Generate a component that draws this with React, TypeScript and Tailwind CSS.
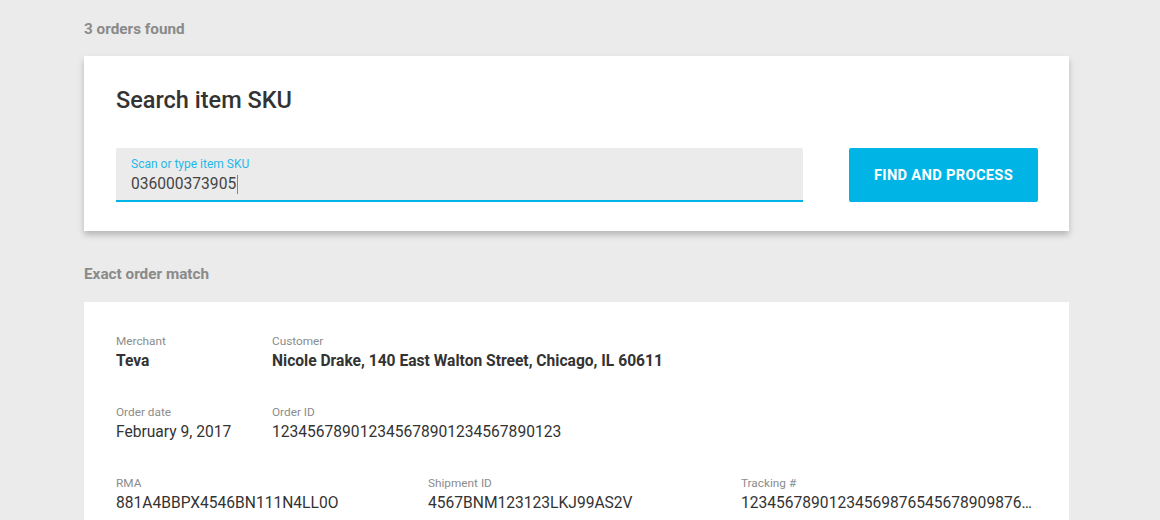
function Field({
    label,
    value,
    strong,
}: {
    label: string;
    value: string;
    strong?: boolean;
}) {
    return (
        <div className="flex flex-col gap-[2px] min-w-0 pr-5">
            <span className="text-[11.8px] leading-4 text-[#8c8c8c]">{label}</span>
            <span
                className={
                    strong
                        ? "text-[15.6px] leading-5 font-bold text-[#333333] truncate"
                        : "text-[15.6px] leading-5 text-[#333333] truncate"
                }
            >
                {value}
            </span>
        </div>
    );
}

export default function App() {
    return (
        <div
            className="w-[1160px] h-[520px] overflow-hidden bg-[#ebebeb] px-[84px] pt-[19px]"
            style={{ fontFamily: "Roboto, 'Liberation Sans', sans-serif" }}
        >
            <div className="w-[985px] flex flex-col">
                <p className="text-[15.3px] leading-5 font-bold text-[#8a8a8a]">3 orders found</p>

                <div className="mt-[17px] bg-white pl-8 pr-[31px] pt-7 pb-[29px] shadow-[0_4px_6px_rgba(0,0,0,0.22)]">
                    <h2 className="text-[23.5px] leading-8 font-medium text-[#333333]">Search item SKU</h2>
                    <div className="mt-8 flex items-start justify-between">
                        <div className="w-[687px] bg-[#ebebeb] rounded-t-[2px] border-b-2 border-[#00b4e6] px-[15px] pt-[8px] pb-[6px] flex flex-col gap-[2px]">
                            <span className="text-[12px] leading-4 text-[#1fb8e8]">Scan or type item SKU</span>
                            <div className="flex items-center text-[15.6px] leading-5 text-[#444444]">
                                036000373905
                                <span className="ml-[1px] w-px h-[19px] bg-[#00b4e6]"></span>
                            </div>
                        </div>
                        <button className="w-[189px] h-[54px] rounded-[2px] bg-[#00b4e6] text-white text-[14.7px] font-bold tracking-[0.3px]">
                            FIND AND PROCESS
                        </button>
                    </div>
                </div>

                <p className="mt-[33px] text-[15.3px] leading-5 font-bold text-[#8a8a8a]">Exact order match</p>

                <div className="mt-[18px] bg-white pl-8 pr-4 pt-[31px] pb-8 flex flex-col gap-[33px]">
                    <div className="grid grid-cols-[156px_1fr]">
                        <Field label="Merchant" value="Teva" strong />
                        <Field
                            label="Customer"
                            value="Nicole Drake, 140 East Walton Street, Chicago, IL 60611"
                            strong
                        />
                    </div>
                    <div className="grid grid-cols-[156px_1fr]">
                        <Field label="Order date" value="February 9, 2017" />
                        <Field label="Order ID" value="123456789012345678901234567890123" />
                    </div>
                    <div className="grid grid-cols-[312px_313px_312px]">
                        <Field label="RMA" value="881A4BBPX4546BN111N4LL0O" />
                        <Field label="Shipment ID" value="4567BNM123123LKJ99AS2V" />
                        <Field label="Tracking #" value="1234567890123456987654567890987654321" />
                    </div>
                </div>
            </div>
        </div>
    );
}
